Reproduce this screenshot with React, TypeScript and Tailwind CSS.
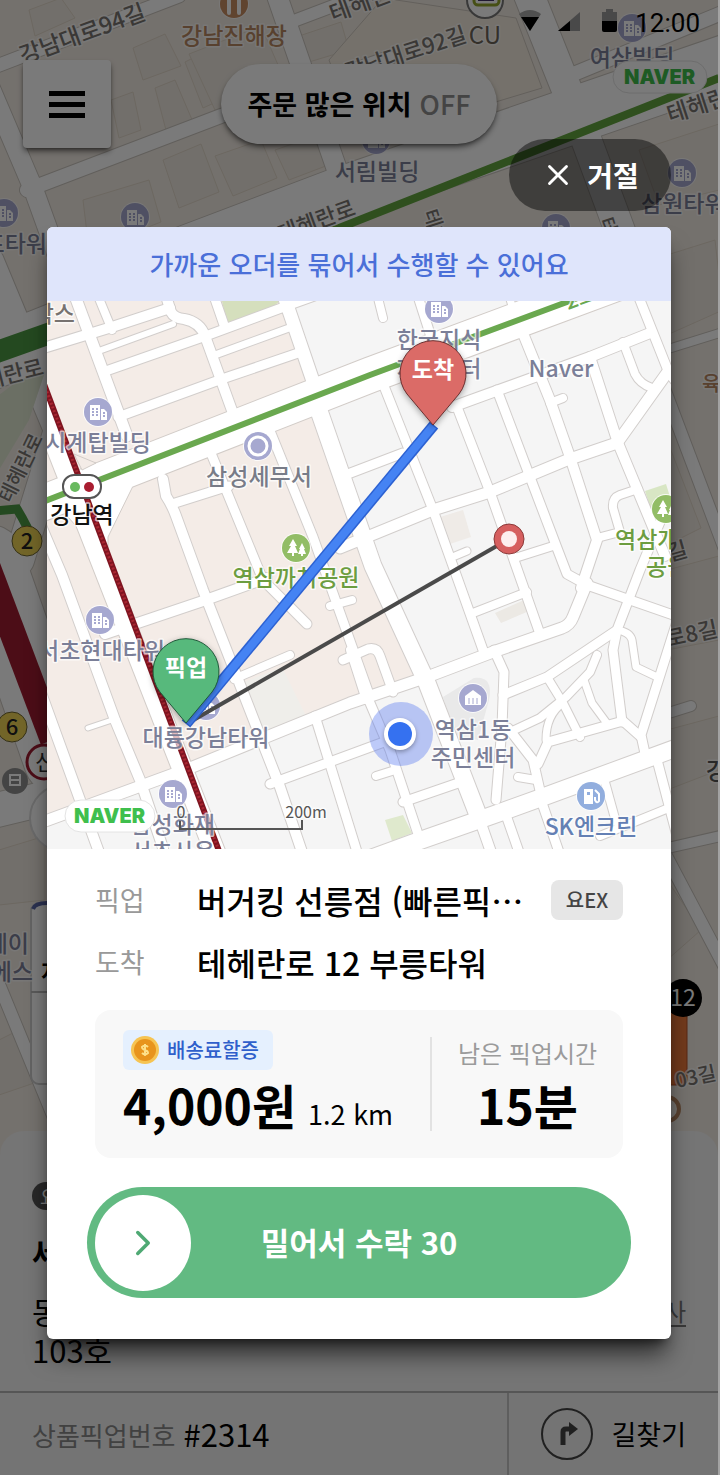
import { ReactNode } from 'react'
import { ChevronRight, X } from 'lucide-react'

type Road = { d: string; w: number }

const modalRoads: Road[] = [
  // north of the main road
  { d: 'M75 296 L127 436', w: 11 },
  { d: 'M98 296 L112 330', w: 8 },
  { d: 'M40 349 L112 327 L170 308', w: 10 },
  { d: 'M166 296 L171 312 Q174 318 184 319 Q200 322 205 336 L234 416', w: 10 },
  { d: 'M96 352 L173 324', w: 6 },
  { d: 'M103 372 L203 337 L292 304 L320 294', w: 9 },
  { d: 'M118 417 L222 379 L304 351', w: 9 },
  { d: 'M215 355 L289 328', w: 7 },
  { d: 'M284 296 L316 390', w: 13 },
  { d: 'M214 296 L224 325', w: 9 },
  { d: 'M376 290 L383 318', w: 8 },
  { d: 'M416 290 L432 340', w: 9 },
  { d: 'M507 290 L514 312', w: 7 },
  // south west blocks
  { d: 'M30 500 L62 575 L115 720 L140 780 L163 848', w: 10 },
  { d: 'M40 690 L100 855', w: 10 },
  { d: 'M40 823 L190 768 L350 703 L427 677 L493 652 L562 628 Q570 625 573 617 L587 583', w: 11 },
  { d: 'M105 634 L200 602 L267 578', w: 10 },
  { d: 'M163 479 L166 496 Q172 505 176 516 L203 590 L280 787 L303 855', w: 10 },
  { d: 'M172 504 L229 486', w: 9 },
  { d: 'M208 446 L263 580 L307 624', w: 9 },
  { d: 'M268 426 L313 537 L370 697', w: 9 },
  { d: 'M234 679 L290 655', w: 8 },
  { d: 'M330 606 L352 600', w: 8 },
  { d: 'M88 728 L112 720', w: 5 },
  { d: 'M343 660 L368 649 Q377 647 380 656 L393 692', w: 9 },
  { d: 'M350 650 L366 700', w: 8 },
  { d: 'M270 784 L384 742', w: 9 },
  { d: 'M315 716 L358 855', w: 9 },
  { d: 'M376 776 L392 771', w: 8 },
  // main cross road on the right
  { d: 'M317 405 L373 566 L427 683 L478 815', w: 17 },
  { d: 'M340 548 L433 510 L490 492 L567 460 L617 443 L667 373', w: 11 },
  { d: 'M380 376 L433 510 L483 650', w: 9 },
  { d: 'M457 407 L490 492 L540 634', w: 9 },
  { d: 'M497 390 L530 477 L557 548 L567 574 L587 585', w: 9 },
  { d: 'M520 326 L550 400 L570 457 L597 540 L581 588', w: 10 },
  { d: 'M452 407 L590 357 L650 333', w: 10 },
  { d: 'M590 357 L618 443 L665 556', w: 10 },
  { d: 'M623 342 L635 374 Q640 384 652 388', w: 8 },
  { d: 'M636 290 L669 373 L690 400', w: 9 },
  { d: 'M515 558 L553 546', w: 8 },
  { d: 'M597 538 L620 532 L613 508 Q612 498 620 495 L638 489', w: 8 },
  { d: 'M340 477 L403 453', w: 9 },
  { d: 'M550 403 L563 398', w: 8 },
  { d: 'M455 556 L467 551', w: 7 },
  // south east blocks
  { d: 'M473 613 L527 592', w: 8 },
  { d: 'M587 585 L676 616', w: 9 },
  { d: 'M665 510 L640 570 L617 630 L547 677 L503 695', w: 9 },
  { d: 'M617 630 L613 650 L622 722', w: 9 },
  { d: 'M617 630 Q630 632 632 640 L636 667 L655 676', w: 7 },
  { d: 'M680 612 L641 735 L646 758', w: 9 },
  { d: 'M494 650 L504 672 L502 727 L496 800', w: 9 },
  { d: 'M547 677 L563 703 L580 737', w: 8 },
  { d: 'M597 655 L590 672 L566 697 L540 718 L510 732', w: 8 },
  { d: 'M584 680 L592 703 L606 722', w: 7 },
  { d: 'M538 764 L548 742 L623 721 L641 737', w: 9 },
  { d: 'M563 703 Q546 715 546 740', w: 7 },
  { d: 'M508 728 L533 760 L541 795', w: 9 },
  { d: 'M518 777 L536 780', w: 8 },
  { d: 'M370 703 L390 750 L420 840', w: 9 },
  { d: 'M403 802 L464 781', w: 9 },
  { d: 'M350 866 L413 843 L493 815 L543 797 L690 743', w: 17 },
  { d: 'M478 815 L492 855', w: 10 },
  { d: 'M506 815 L520 855', w: 9 },
  { d: 'M541 800 L560 855', w: 9 },
  { d: 'M603 775 L616 822', w: 8 },
  { d: 'M600 836 L676 805', w: 8 },
  { d: 'M656 756 L682 855', w: 9 },
]

const baseRoads: Road[] = [
  { d: 'M-10 69 L180 -4', w: 13 },
  { d: 'M-10 85 L34 188 L60 260', w: 19 },
  { d: 'M28 190 L222 116 L390 58', w: 14 },
  { d: 'M276 -10 L345 190', w: 20 },
  { d: 'M292 22 L366 -6', w: 12 },
  { d: 'M528 -10 L580 120 L628 250', w: 30 },
  { d: 'M560 80 L730 10', w: 14 },
  { d: 'M150 268 L340 196 L730 62', w: 56 },
  { d: 'M-10 262 L60 430 L20 560', w: 30 },
  { d: 'M-10 360 L60 332', w: 60 },
  { d: 'M-10 560 L60 760', w: 70 },
  { d: 'M-10 812 L60 795', w: 34 },
  { d: 'M-10 960 L60 1130', w: 12 },
  { d: 'M666 350 L730 330', w: 8 },
  { d: 'M660 375 L730 560', w: 12 },
  { d: 'M660 716 L692 706', w: 10 },
  { d: 'M660 850 L730 834', w: 10 },
  { d: 'M664 850 L730 975', w: 12 },
]

const RoadNetwork = ({ roads, casing }: { roads: Road[]; casing: string }) => (
  <g fill="none" strokeLinecap="round" strokeLinejoin="round">
    {roads.map((r) => (
      <path key={`c${r.d}`} d={r.d} stroke={casing} strokeWidth={r.w + 2} />
    ))}
    {roads.map((r) => (
      <path key={r.d} d={r.d} stroke="#fff" strokeWidth={r.w} />
    ))}
  </g>
)

const Label = (props: {
  x: number
  y: number
  children: ReactNode
  fill?: string
  anchor?: 'start' | 'middle' | 'end'
  rotate?: number
  size?: number
  weight?: number
}) => {
  const { x, y, children, fill = '#7b7f98', anchor = 'middle', rotate = 0, size = 23, weight = 500 } = props
  return (
    <text
      x={x}
      y={y}
      fill={fill}
      fontSize={size}
      fontWeight={weight}
      textAnchor={anchor}
      stroke="#fff"
      strokeWidth="3"
      strokeOpacity="0.7"
      paintOrder="stroke"
      strokeLinejoin="round"
      transform={rotate ? `rotate(${rotate} ${x} ${y})` : undefined}
    >
      {children}
    </text>
  )
}

const Poi = ({ x, y, fill = '#a6a8d0', children }: { x: number; y: number; fill?: string; children?: ReactNode }) => (
  <g transform={`translate(${x} ${y})`}>
    <circle r="15" fill="#fff" fillOpacity="0.8" />
    <circle r="14" fill={fill} />
    {children}
  </g>
)

const Building = ({ x, y }: { x: number; y: number }) => (
  <Poi x={x} y={y}>
    <path d="M-8 -7 H2 V8 H-8 Z M3 -3 H6 L9 0 V8 H3 Z" fill="#fff" />
    <path d="M-5 -4 v8 M-1 -4 v8 M6 0 v5" stroke="#a6a8d0" strokeWidth="2" strokeDasharray="2 1" />
  </Poi>
)

const Trees = ({ x, y }: { x: number; y: number }) => (
  <Poi x={x} y={y} fill="#92bd66">
    <path d="M-3 -9 L-7 -2 H-5 L-9 5 H-4 V8 H-2 V5 H2 L-1 -2 H1 Z" fill="#fff" />
    <path d="M6 -5 L3 1 H4 L2 6 H5 V8 H7 V6 H10 L8 1 H9 Z" fill="#fff" />
  </Poi>
)

const NaverBadge = ({ x, y, width, pad }: { x: number; y: number; width: number; pad: number }) => (
  <g>
    <rect x={x} y={y} width={width} height="32" rx="16" fill="#fff" stroke="#e4e4e4" />
    <text x={x + pad} y={y + 23} fill="#3fbf4d" fontSize="20" fontWeight="900" fontFamily="Inter, sans-serif">
      NAVER
    </text>
  </g>
)

const Pin = ({ x, y, fill, stroke, label }: { x: number; y: number; fill: string; stroke: string; label: string }) => (
  <g transform={`translate(${x} ${y})`}>
    <path
      d="M0 52 L-26 21 A33 33 0 1 1 26 21 Z"
      fill={fill}
      stroke={stroke}
      strokeWidth="1"
      style={{ filter: 'drop-shadow(0 2px 3px rgb(0 0 0 / 0.35))' }}
    />
    <text y="5" fill="#fff" fontSize="23" fontWeight="700" textAnchor="middle">
      {label}
    </text>
  </g>
)

function BaseMap() {
  return (
    <svg
      viewBox="0 0 720 1475"
      preserveAspectRatio="xMidYMin slice"
      className="absolute inset-0 h-full w-full"
      aria-hidden="true"
    >
      <rect width="720" height="1475" fill="#f3ece4" />
      {/* building footprints */}
      <g fill="#eee8e0" stroke="#e2d8ca" strokeWidth="1">
        <path d="M30 10 L62 -2 L76 18 L36 36 Z" />
        <path d="M134 48 L166 34 L182 66 L144 80 Z" />
        <path d="M156 88 L176 80 L194 122 L168 134 Z" />
        <path d="M186 62 L206 52 L226 98 L204 108 Z" />
        <path d="M190 54 L262 26 L290 90 L216 110 Z" />
        <path d="M112 100 L134 92 L142 130 L120 138 Z" />
        <path d="M164 160 L202 144 L220 192 L180 208 Z" />
        <path d="M216 156 L262 140 L278 178 L234 196 Z" />
        <path d="M276 150 L322 134 L332 164 L290 180 Z" />
        <path d="M84 200 L150 180 L162 222 L90 250 Z" />
        <path d="M300 36 L342 22 L350 50 L310 62 Z" />
        <path d="M640 150 L720 124 V190 L660 205 Z" />
        <path d="M668 255 L716 240 L724 310 L668 335 Z" />
        <path d="M668 440 L702 528 L668 545 Z" />
        <path d="M668 570 L720 556 V640 L668 650 Z" />
        <path d="M668 730 L720 716 V770 L668 790 Z" />
        <path d="M668 880 L702 930 L668 960 Z" />
        <path d="M0 1040 L20 1030 L44 1080 L0 1095 Z" />
        <path d="M0 850 L46 836 V900 L0 905 Z" />
      </g>
      <path d="M384 -2 L517 18 L543 88 L470 110 L360 140 L330 60 Z" fill="#f4ece0" stroke="#cfc8bf" />
      <RoadNetwork roads={baseRoads} casing="#cbc6bf" />
      <path d="M0 395 L20 380 L46 372 L30 420 L0 470 Z" fill="#dfe8d2" />

      {/* subway lines */}
      <g fill="none">
        <path d="M320 236 L720 78" stroke="#62a53f" strokeWidth="8" />
        <path d="M-5 353 L60 330" stroke="#4d9a43" strokeWidth="22" />
        <path d="M-5 511 L18 509 Q28 525 36 545" stroke="#4d9a43" strokeWidth="9" />
        <path d="M-14 560 L54 740" stroke="#a01c30" strokeWidth="26" />
      </g>

      <Label x={24} y={64} anchor="start" rotate={-20} fill="#7a7672">강남대로94길</Label>
      <Label x={235} y={44} fill="#b98862">강남진해장</Label>
      <Poi x={235} y={4} fill="#c98e62">
        <path d="M-5 -8 V0 M-5 0 V9 M5 -8 V9" stroke="#fff" strokeWidth="4" strokeLinecap="round" />
      </Poi>
      <Label x={334} y={22} anchor="start" rotate={-20} fill="#7a7672">테헤란로</Label>
      <Label x={469} y={41} anchor="end" rotate={-18} fill="#7a7672" size={22}>강남대로92길</Label>
      <Label x={486} y={44} fill="#6d6458" size={24} weight={400}>CU</Label>
      <g>
        <circle cx="486" cy="0" r="18" fill="#fff" stroke="#777" strokeWidth="2" />
        <rect x="475" y="-12" width="25" height="17" rx="4" fill="#fff" stroke="#93a52c" strokeWidth="3" />
        <rect x="479" y="-3" width="16" height="4" fill="#45366c" />
      </g>
      <Building x={377} y={140} />
      <Label x={378} y={180}>서림빌딩</Label>
      <Building x={633} y={28} />
      <Label x={633} y={66}>여삼빌딩</Label>
      <Building x={683} y={173} />
      <Label x={642} y={212} anchor="start">삼원타워</Label>
      <Label x={671} y={123} anchor="start" rotate={-18} fill="#7a7672">테헤란로</Label>
      <Label x={282} y={242} anchor="start" rotate={-20} fill="#7a7672" size={22}>테헤란로</Label>
      <Label x={424} y={212} anchor="start" rotate={72} fill="#7a7672" size={20}>테헤란로</Label>
      <Label x={600} y={220} anchor="start" rotate={72} fill="#7a7672" size={20}>테헤란로</Label>
      <Building x={5} y={213} />
      <Building x={136} y={217} />
      <Building x={557} y={228} />
      <Label x={48} y={252} anchor="end">프타워</Label>
      <Label x={46} y={374} anchor="end" rotate={-14} fill="#7a7672" size={22}>테헤란로</Label>
      <Label x={12} y={504} anchor="start" rotate={-64} fill="#7a7672" size={20}>테헤란로</Label>

      {/* line numbers */}
      <g stroke="#6d6430" strokeWidth="1" fill="#eed455">
        <circle cx="28" cy="541" r="15" />
        <circle cx="13" cy="727" r="15" />
      </g>
      <text x="28" y="549" fontSize="22" textAnchor="middle" fill="#222" fontWeight="500">2</text>
      <text x="13" y="735" fontSize="22" textAnchor="middle" fill="#222" fontWeight="500">6</text>
      <circle cx="45" cy="762" r="17" fill="#fff" stroke="#a01c30" strokeWidth="3" />
      <text x="36" y="770" fontSize="22" fill="#333">신</text>
      <circle cx="16" cy="781" r="13" fill="#8f8f8f" />
      <path d="M11 775 H21 V785 H11 Z M11 780 H21" fill="none" stroke="#fff" strokeWidth="2" />

      {/* floating map controls */}
      <circle cx="64" cy="818" r="33" fill="#fff" stroke="#ddd" strokeWidth="2" />
      <rect x="32" y="903" width="90" height="181" rx="8" fill="#fff" stroke="#d0d0d0" strokeWidth="2" />
      <path d="M34 909 Q36 903 48 903" fill="none" stroke="#5a67a8" strokeWidth="4" />
      <path d="M32 992 H122" stroke="#bbb" strokeWidth="2" />
      <text x="42" y="980" fontSize="22" fontWeight="700">지</text>
      <Label x={30} y={952} anchor="end">에이</Label>
      <Label x={34} y={980} anchor="end">은에스</Label>

      <Label x={703} y={391} anchor="start" fill="#b98862" size={20}>육회</Label>
      <Label x={690} y={556} anchor="end" rotate={-16} fill="#7a7672" size={22}>로5길</Label>
      <Label x={720} y={636} anchor="end" rotate={-12} fill="#7a7672" size={22}>로8길</Label>
      <Label x={707} y={779} anchor="start" fill="#555">강남</Label>
      <rect x="640" y="1000" width="48" height="85" rx="5" fill="#ee7a3c" stroke="#b9542a" />
      <Label x={678} y={1088} anchor="start" rotate={-12} fill="#7a7672" size={20}>03길</Label>
      <circle cx="684" cy="998" r="19" fill="#000" />
      <text x="684" y="1006" fill="#fff" fontSize="23" textAnchor="middle">12</text>
      <circle cx="668" cy="1109" r="12" fill="none" stroke="#b98862" strokeWidth="4" />

      <NaverBadge x={614} y={61} width={94} pad={11} />
    </svg>
  )
}

function RouteMap() {
  return (
    <svg viewBox="47 301 624 548" className="block w-full" role="img" aria-label="배송 경로 지도">
      <rect x="47" y="301" width="624" height="548" fill="#f5f5f5" />
      <path d="M47 301 H286 L312 382 L427 683 L350 703 L190 770 L47 825 Z" fill="#f4ece7" />
      <path d="M222 301 H280 L270 309 L227 325 Z" fill="#d5dfbd" />
      <path d="M241 683 L282 667 L307 718 L260 736 Z" fill="#efeeea" />
      <path d="M645 491 L666 484 L671 500 V516 L652 513 Z" fill="#d8e6c4" />
      <path d="M385 820 L403 815 L412 833 L392 841 Z" fill="#dfe9cd" />
      <path d="M440 517 L463 510 L471 537 L447 545 Z" fill="#efebe7" />
      <path d="M495 613 L524 600 L529 611 L501 623 Z" fill="#ece9e4" />
      <path d="M443 697 L474 678 Q494 676 489 700 L478 740 L455 735 Z" fill="#e9e9e9" />

      {/* main road first so that side roads open into it */}
      <path d="M30 380 L226 880" stroke="#d2ccc8" strokeWidth="22" fill="none" />
      <path d="M40 504 L370 375 L690 256" stroke="#d2ccc8" strokeWidth="37" fill="none" />
      <RoadNetwork roads={modalRoads} casing="#d2cecc" />
      <path d="M135 482 L108 537 V562 L84 535 L60 508 Z" fill="#fff" stroke="#d2ccc8" />
      <g stroke="#fff" fill="none">
        <path d="M30 380 L226 880" strokeWidth="20" />
        <path d="M40 504 L370 375 L690 256" strokeWidth="35" />
      </g>
      <path d="M74 454 L96 463 L82 470 Z" fill="#f4ece7" stroke="#d2ccc8" />

      <path d="M40 503 L370 375 L567 302 L640 274" stroke="#6aa84f" strokeWidth="6" fill="none" />
      <path d="M44 384 L222 859" stroke="#7f1420" strokeWidth="6" />
      <path d="M44 384 L222 859" stroke="#a82631" strokeWidth="3" strokeDasharray="2 2" />

      <Label x={75} y={322} anchor="end" fill="#777270">박스</Label>
      <Building x={98} y={412} />
      <Label x={98} y={451}>시계탑빌딩</Label>
      <rect x="63" y="475" width="38" height="23" rx="11" fill="#fff" stroke="#555" strokeWidth="2" />
      <circle cx="75" cy="487" r="5" fill="#69b95f" />
      <circle cx="89" cy="487" r="5" fill="#a91d30" />
      <Label x={82} y={523} fill="#111">강남역</Label>
      <Poi x={258} y={446}>
        <circle r="9" fill="none" stroke="#fff" strokeWidth="3" />
      </Poi>
      <Label x={259} y={485} fill="#787c88">삼성세무서</Label>
      <Trees x={296} y={548} />
      <Label x={296} y={586} fill="#6c9d40">역삼까치공원</Label>
      <Building x={100} y={620} />
      <Label x={165} y={659} anchor="end">서초현대타워</Label>
      <Building x={206} y={706} />
      <Label x={206} y={746}>대륭강남타워</Label>
      <Building x={173} y={794} />
      <Label x={215} y={833} anchor="end">삼성화재</Label>
      <Label x={215} y={860} anchor="end">서초사옥</Label>
      <Building x={439} y={309} />
      <Label x={439} y={348}>한국지식</Label>
      <Label x={439} y={377}>재산센터</Label>
      <Label x={561} y={377}>Naver</Label>
      <Label x={568} y={310} fill="#6aa84f" rotate={-20} anchor="start" size={22}>2호선</Label>
      <Trees x={666} y={509} />
      <Label x={615} y={548} anchor="start" fill="#6c9d40">역삼개나리</Label>
      <Label x={646} y={575} anchor="start" fill="#6c9d40">공원</Label>
      <Poi x={473} y={698}>
        <path d="M-8 -2 L0 -8 L8 -2 V7 H-8 Z" fill="#fff" />
        <path d="M-4 0 V6 M0 0 V6 M4 0 V6" stroke="#a6a8d0" />
      </Poi>
      <Label x={473} y={738}>역삼1동</Label>
      <Label x={473} y={766}>주민센터</Label>
      <Poi x={591} y={796} fill="#92aede">
        <path d="M-7 -7 H2 V8 H-7 Z" fill="#fff" />
        <path d="M-4 -4 H-1 V-1 H-4 Z" fill="#92aede" />
        <path d="M4 -6 L8 -2 V5 Q6 8 4 4 V1" stroke="#fff" strokeWidth="2" fill="none" />
      </Poi>
      <Label x={591} y={835} fill="#6480b4">SK엔크린</Label>

      {/* scale */}
      <path d="M180 821 V829 H302 V820" stroke="#555" strokeWidth="2" fill="none" />
      <Label x={181} y={818} size={16} fill="#555" weight={400}>0</Label>
      <Label x={306} y={818} size={16} fill="#555" weight={400}>200m</Label>
      <NaverBadge x={65} y={800} width={90} pad={9} />

      {/* route */}
      <path d="M190 722 L509 539" stroke="#4a4a4a" strokeWidth="4" />
      <circle cx="509" cy="539" r="15" fill="#d65f5f" stroke="#8c3a3a" strokeWidth="1" />
      <circle cx="509" cy="539" r="8" fill="#fdeeee" />
      <path d="M186 724 L434 425" stroke="#2c61d2" strokeWidth="11" />
      <path d="M187 723 L433 426" stroke="#4583f3" strokeWidth="8" />
      <Pin x={433} y={373} fill="#db6b67" stroke="#6b2f2f" label="도착" />
      <Pin x={186} y={671} fill="#57b97c" stroke="#1f5a3a" label="픽업" />

      {/* current location */}
      <circle cx="401" cy="734" r="32" fill="#5b7bf0" fillOpacity="0.4" />
      <circle cx="400" cy="734" r="16" fill="#fff" style={{ filter: 'drop-shadow(0 2px 2px rgb(0 0 0 / 0.3))' }} />
      <circle cx="400" cy="734" r="12" fill="#3571f0" />
    </svg>
  )
}

function StatusBar() {
  return (
    <div className="flex h-[46px] items-center justify-end pr-[18px]">
      <svg viewBox="0 0 112 32" className="h-8 w-[112px]" aria-hidden="true">
        <path d="M0 7 Q11 -1 22 7 L11 24 Z" fill="#a8a8a8" />
        <path d="M2 10 H20 L11 24 Z" fill="#000" />
        <path d="M39 24 L61 5 V24 Z" fill="#9a9a9a" />
        <path d="M39 24 L51 14 V24 Z" fill="#000" />
        <path d="M83 5 H87 V2 H94 V5 H98 V14 H83 Z" fill="#9a9a9a" />
        <path d="M83 14 H98 V23 Q98 25 96 25 H85 Q83 25 83 23 Z" fill="#000" />
      </svg>
      <span className="ml-1 font-[Roboto,sans-serif] text-[26px] leading-8">12:00</span>
    </div>
  )
}

function HomeScreen() {
  return (
    <div className="relative col-start-1 row-start-1 flex flex-col overflow-hidden">
      <BaseMap />
      <div className="relative">
        <StatusBar />
        <header className="grid grid-cols-[1fr_auto_1fr] items-center px-[23px] pt-[14px]">
          <button
            type="button"
            aria-label="메뉴"
            className="flex h-[88px] w-[88px] flex-col items-center justify-center gap-[6px] rounded bg-white shadow-md shadow-black/50"
          >
            <span className="h-[5px] w-9 bg-black" />
            <span className="h-[5px] w-9 bg-black" />
            <span className="h-[5px] w-9 bg-black" />
          </button>
          <button
            type="button"
            className="flex h-20 items-center gap-2 rounded-full bg-white px-[26px] text-[27px] font-bold shadow-md shadow-black/50"
          >
            주문 많은 위치 <span className="font-medium text-[#8f8f8f]">OFF</span>
          </button>
        </header>
      </div>

      <div className="flex-1" />

      <section className="relative rounded-t-3xl bg-[#f4f4f4] px-8 pt-[51px] pb-[22px] text-[31px] leading-[39px]">
        <span className="flex h-7 w-20 items-center rounded-full bg-[#555] px-2 text-[20px] text-white">요</span>
        <h2 className="mt-[22px] font-bold">세</h2>
        <div className="mt-5 flex items-center justify-between">
          <span>동</span>
          <a href="#copy" className="text-[24px] text-[#777] underline underline-offset-4">
            복사
          </a>
        </div>
        <p>103호</p>
      </section>

      <footer className="relative flex h-[84px] border-t-2 border-[#b5b5b5] bg-[#f2f2f2]">
        <div className="flex flex-1 items-center gap-2 pl-8">
          <span className="text-[26px] text-[#888]">상품픽업번호</span>
          <span className="text-[31px]">#2314</span>
        </div>
        <button
          type="button"
          className="flex items-center gap-[18px] border-l-2 border-[#c4c4c4] pr-8 pl-8 text-[27px]"
        >
          <svg viewBox="0 0 52 52" className="h-[52px] w-[52px]" fill="none" aria-hidden="true">
            <circle cx="26" cy="26" r="25" stroke="#444" strokeWidth="2" />
            <path d="M22 37 V24 Q22 21 25 21 H29" stroke="#444" strokeWidth="5" />
            <path d="M28 14 L37 21 L28 28 Z" fill="#444" />
          </svg>
          길찾기
        </button>
      </footer>
    </div>
  )
}

const Coin = () => (
  <svg viewBox="0 0 28 28" className="h-7 w-7" aria-hidden="true">
    <circle cx="14" cy="14" r="14" fill="#f6c453" />
    <circle cx="14" cy="14" r="11" fill="#e8941d" />
    <path
      d="M17 11 Q14 8 11 11 Q11 13 14 14 Q17 15 17 17 Q14 20 11 17 M14 8 V20"
      fill="none"
      stroke="#fde08a"
      strokeWidth="2"
    />
  </svg>
)

function OrderModal() {
  return (
    <div role="dialog" aria-label="묶음 배송 제안" className="overflow-hidden rounded-md bg-white shadow-xl shadow-black/60">
      <h1 className="bg-[#dfe5fb] py-[18px] text-center text-[26px] leading-[38px] font-medium text-[#4a6fd8]">
        가까운 오더를 묶어서 수행할 수 있어요
      </h1>
      <RouteMap />

      <div className="px-12 pt-[27px] pb-[41px]">
        <dl className="flex flex-col gap-[14px]">
          <div className="flex h-12 items-center">
            <dt className="w-[102px] shrink-0 text-[27px] text-[#999]">픽업</dt>
            <dd className="flex min-w-0 flex-1 items-center justify-between text-[32px] font-medium">
              <span className="truncate">버거킹 선릉점 (빠른픽…</span>
              <span className="flex h-10 w-[72px] shrink-0 items-center justify-center rounded-lg bg-[#e6e6e6] text-[20px] text-[#444]">
                요EX
              </span>
            </dd>
          </div>
          <div className="flex h-12 items-center">
            <dt className="w-[102px] shrink-0 text-[27px] text-[#999]">도착</dt>
            <dd className="text-[32px] font-medium">테헤란로 12 부릉타워</dd>
          </div>
        </dl>

        <div className="mt-6 flex h-[148px] items-center rounded-2xl bg-[#f8f8f8]">
          <div className="flex-1 pl-7">
            <div className="flex h-10 w-fit items-center gap-2 rounded-md bg-[#e5f0fe] pr-[14px] pl-2 text-[20px] font-medium text-[#2f5fcb]">
              <Coin />
              배송료할증
            </div>
            <p className="flex items-baseline gap-3">
              <strong className="text-[48px] leading-[68px] font-bold">4,000원</strong>
              <span className="text-[27px] leading-8">1.2 km</span>
            </p>
          </div>
          <div className="h-[94px] w-[2px] bg-[#e2e2e2]" />
          <div className="w-[191px] text-center">
            <p className="text-[24px] leading-10 text-[#9b9b9b]">남은 픽업시간</p>
            <p className="text-[48px] leading-[62px] font-bold">15분</p>
          </div>
        </div>

        <div className="-mx-2 mt-[29px]">
          <button
            type="button"
            className="flex h-[111px] w-full items-center rounded-full bg-[#62ba82] px-2 text-[31px] font-bold text-white"
          >
            <span className="flex h-24 w-24 shrink-0 items-center justify-center rounded-full bg-white text-[#4fa974]">
              <ChevronRight size={42} strokeWidth={2} />
            </span>
            <span className="flex-1 pr-24">밀어서 수락 30</span>
          </button>
        </div>
      </div>
    </div>
  )
}

export default function App() {
  return (
    <div
      lang="ko"
      className="grid min-h-screen grid-cols-1 bg-[#a3a3a3] pr-[2px] font-['Noto_Sans_CJK_KR',sans-serif] text-black"
    >
      <HomeScreen />
      <div className="relative col-start-1 row-start-1 flex flex-col bg-black/52 px-[47px] pt-[139px] pb-[136px]">
        <button
          type="button"
          className="mb-4 flex h-[72px] w-[162px] items-center justify-center gap-3 self-end rounded-full bg-black/45 text-[28px] font-bold text-white"
        >
          <X size={34} strokeWidth={2} />
          거절
        </button>
        <OrderModal />
      </div>
    </div>
  )
}
